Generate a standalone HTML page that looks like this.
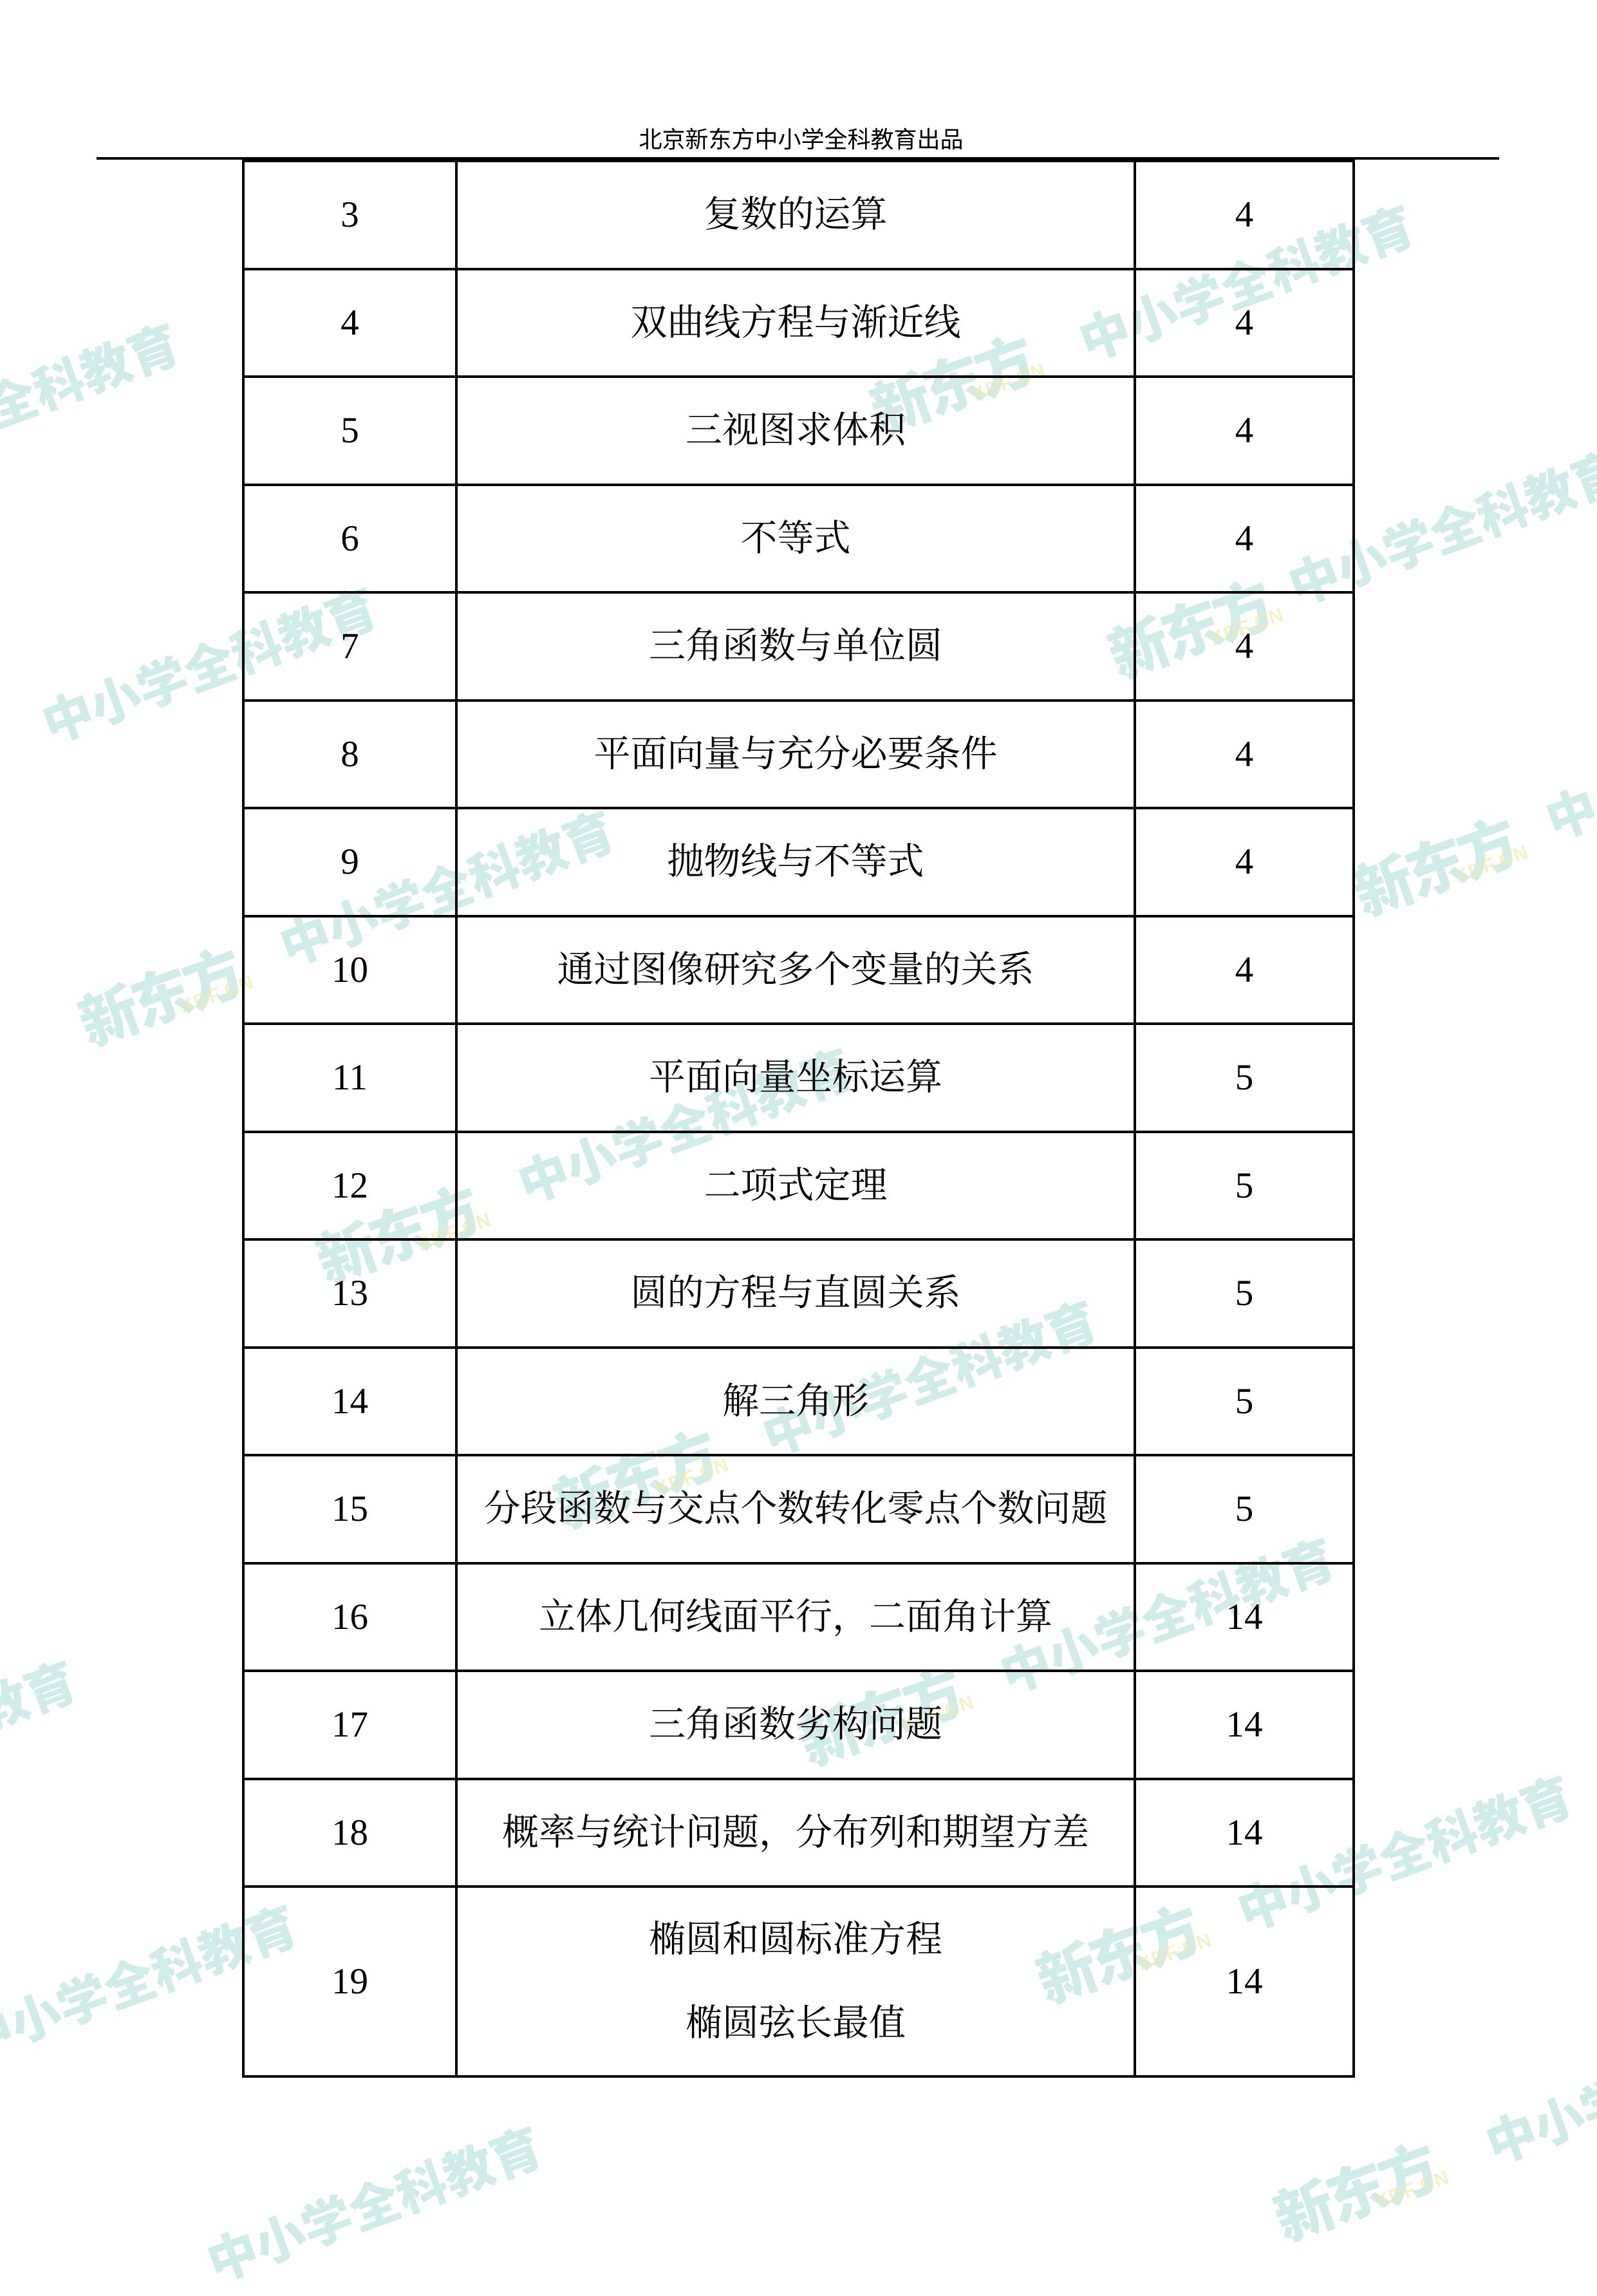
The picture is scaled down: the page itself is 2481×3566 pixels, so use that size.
<!DOCTYPE html>
<html><head><meta charset="utf-8"><style>
html,body{margin:0;padding:0;background:#fff}
body{width:2481px;height:3509px;position:relative;overflow:hidden;font-family:"Liberation Serif","Noto Serif CJK SC",serif;color:#000}
.wm{position:absolute;transform:translate(-50%,-50%) rotate(-20deg);font-family:"Liberation Sans","Noto Sans CJK SC",sans-serif;font-weight:900;color:rgba(170,220,215,0.55);white-space:nowrap;z-index:0}
.wm.a{font-size:78px}
.wm.b{font-size:92px;letter-spacing:-6px}
.wm.b span{position:absolute;left:60%;top:62%;font-size:30px;color:rgba(240,235,170,0.7);letter-spacing:2px}
.hdr{position:absolute;left:0;width:100%;top:188px;text-align:center;font-family:"Liberation Sans","Noto Sans CJK SC",sans-serif;font-size:36px;padding-left:8px;box-sizing:border-box;z-index:2}
.hline{position:absolute;left:150px;width:2179px;top:244px;height:4px;background:#000;z-index:2}
table{position:absolute;left:376px;top:248px;border-collapse:collapse;z-index:1;table-layout:fixed}
td{border:4px solid #000;text-align:center;vertical-align:middle;font-size:57px;padding:0;height:163.5px;line-height:1}
td.c1{width:327px}
td.c2{width:1050px;border-left-width:3px;border-right-width:3px}
td.c3{width:336px}
</style></head><body>
<div class="wm b" style="left:1476px;top:593px">新东方<span>XDF.CN</span></div>
<div class="wm a" style="left:1935px;top:436px">中小学全科教育</div>
<div class="wm a" style="left:2260px;top:816px">中小学全科教育</div>
<div class="wm b" style="left:1846px;top:973px">新东方<span>XDF.CN</span></div>
<div class="wm a" style="left:324px;top:1030px">中小学全科教育</div>
<div class="wm a" style="left:693px;top:1376px">中小学全科教育</div>
<div class="wm b" style="left:2226px;top:1342px">新东方<span>XDF.CN</span></div>
<div class="wm b" style="left:246px;top:1544px">新东方<span>XDF.CN</span></div>
<div class="wm a" style="left:1063px;top:1745px">中小学全科教育</div>
<div class="wm b" style="left:615px;top:1913px">新东方<span>XDF.CN</span></div>
<div class="wm a" style="left:1443px;top:2137px">中小学全科教育</div>
<div class="wm b" style="left:984px;top:2293px">新东方<span>XDF.CN</span></div>
<div class="wm a" style="left:1812px;top:2506px">中小学全科教育</div>
<div class="wm b" style="left:1365px;top:2662px">新东方<span>XDF.CN</span></div>
<div class="wm a" style="left:2181px;top:2875px">中小学全科教育</div>
<div class="wm b" style="left:1734px;top:3031px">新东方<span>XDF.CN</span></div>
<div class="wm a" style="left:200px;top:3076px">中小学全科教育</div>
<div class="wm a" style="left:580px;top:3420px">中小学全科教育</div>
<div class="wm b" style="left:2103px;top:3400px">新东方<span>XDF.CN</span></div>
<div class="wm a" style="left:2420px;top:3290px">中小学</div>
<div class="wm a" style="left:90px;top:593px">学全科教育</div>
<div class="wm a" style="left:40px;top:2630px">教育</div>
<div class="wm a" style="left:2440px;top:1260px">中</div>

<div class="hdr">北京新东方中小学全科教育出品</div>
<div class="hline"></div>
<table>
<tr><td class="c1">3</td><td class="c2">复数的运算</td><td class="c3">4</td></tr>
<tr><td class="c1">4</td><td class="c2">双曲线方程与渐近线</td><td class="c3">4</td></tr>
<tr><td class="c1">5</td><td class="c2">三视图求体积</td><td class="c3">4</td></tr>
<tr><td class="c1">6</td><td class="c2">不等式</td><td class="c3">4</td></tr>
<tr><td class="c1">7</td><td class="c2">三角函数与单位圆</td><td class="c3">4</td></tr>
<tr><td class="c1">8</td><td class="c2">平面向量与充分必要条件</td><td class="c3">4</td></tr>
<tr><td class="c1">9</td><td class="c2">抛物线与不等式</td><td class="c3">4</td></tr>
<tr><td class="c1">10</td><td class="c2">通过图像研究多个变量的关系</td><td class="c3">4</td></tr>
<tr><td class="c1">11</td><td class="c2">平面向量坐标运算</td><td class="c3">5</td></tr>
<tr><td class="c1">12</td><td class="c2">二项式定理</td><td class="c3">5</td></tr>
<tr><td class="c1">13</td><td class="c2">圆的方程与直圆关系</td><td class="c3">5</td></tr>
<tr><td class="c1">14</td><td class="c2">解三角形</td><td class="c3">5</td></tr>
<tr><td class="c1">15</td><td class="c2">分段函数与交点个数转化零点个数问题</td><td class="c3">5</td></tr>
<tr><td class="c1">16</td><td class="c2">立体几何线面平行，二面角计算</td><td class="c3">14</td></tr>
<tr><td class="c1">17</td><td class="c2">三角函数劣构问题</td><td class="c3">14</td></tr>
<tr><td class="c1">18</td><td class="c2">概率与统计问题，分布列和期望方差</td><td class="c3">14</td></tr>
<tr><td class="c1" style="height:291px">19</td><td class="c2" style="height:291px;line-height:130px">椭圆和圆标准方程<br>椭圆弦长最值</td><td class="c3" style="height:291px">14</td></tr>
</table>
</body></html>
